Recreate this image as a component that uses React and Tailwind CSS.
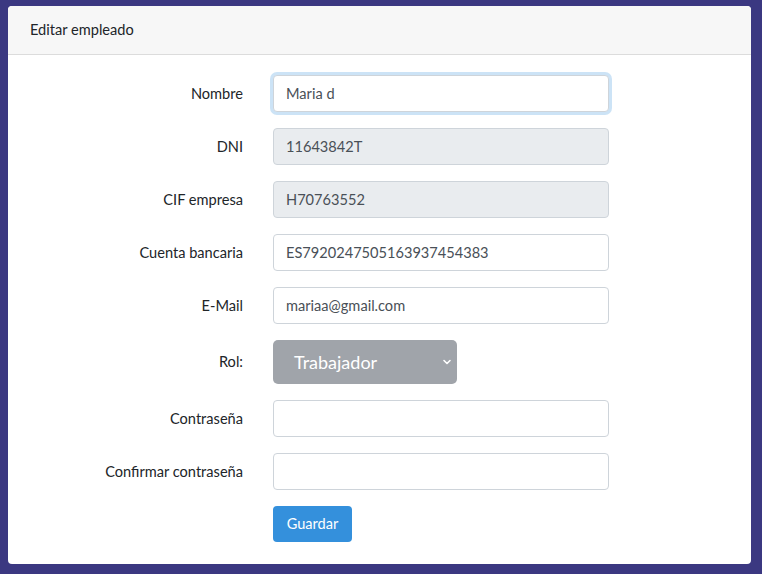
const fields = [
  { label: "Nombre", value: "Maria d", focused: true },
  { label: "DNI", value: "11643842T", disabled: true },
  { label: "CIF empresa", value: "H70763552", disabled: true },
  { label: "Cuenta bancaria", value: "ES7920247505163937454383" },
  { label: "E-Mail", value: "mariaa@gmail.com" },
];

function Row({ label, children }) {
  return (
    <div className="flex items-center mb-4">
      <label className="w-[215px] text-right text-[14.6px] text-[#212529]">{label}</label>
      <div className="ml-[30px]">{children}</div>
    </div>
  );
}

function TextInput({ value, disabled, focused, type = "text" }) {
  return (
    <input
      type={type}
      defaultValue={value}
      disabled={disabled}
      className={
        "block w-[336px] h-[37px] px-[12px] text-[14.6px] text-[#495057] rounded-[4px] border outline-none " +
        (disabled ? "bg-[#e9ecef] border-[#ced4da] " : "bg-white border-[#ced4da] ") +
        (focused ? "border-[#a1cbef] shadow-[0_0_0_3px_rgba(52,144,220,0.25)]" : "")
      }
    />
  );
}

export default function App() {
  return (
    <div className="min-h-screen bg-[#3b3881] pl-[8px] pr-[11px] pt-[6px] pb-[11px] font-['Lato','Noto_Sans',sans-serif]">
      <div className="bg-white rounded-[4px] overflow-hidden">
        <div className="h-[49px] bg-[#f7f7f7] border-b border-[#dcdcdc] px-[22px] flex items-center text-[14.6px] text-[#212529]">
          Editar empleado
        </div>
        <div className="px-[20px] pt-[20px] pb-[22px]">
          {fields.map((f) => (
            <Row key={f.label} label={f.label}>
              <TextInput value={f.value} disabled={f.disabled} focused={f.focused} />
            </Row>
          ))}
          <Row label="Rol:">
            <div className="relative w-[184px] h-[44px] rounded-[5px] bg-[#a0a4aa] flex items-center pl-[21px] text-white text-[18px]">
              Trabajador
              <svg className="absolute right-[5px] top-[17px]" width="10" height="10" viewBox="0 0 10 10">
                <path d="M2 3.5 L5 6.5 L8 3.5" fill="none" stroke="white" strokeWidth="1.6" strokeLinecap="round" strokeLinejoin="round" />
              </svg>
            </div>
          </Row>
          <Row label="Contraseña">
            <TextInput value="" type="password" />
          </Row>
          <Row label="Confirmar contraseña">
            <TextInput value="" type="password" />
          </Row>
          <div className="ml-[245px]">
            <button className="h-[36px] w-[79px] rounded-[4px] bg-[#3490dc] text-white text-[14.6px]">
              Guardar
            </button>
          </div>
        </div>
      </div>
    </div>
  );
}
